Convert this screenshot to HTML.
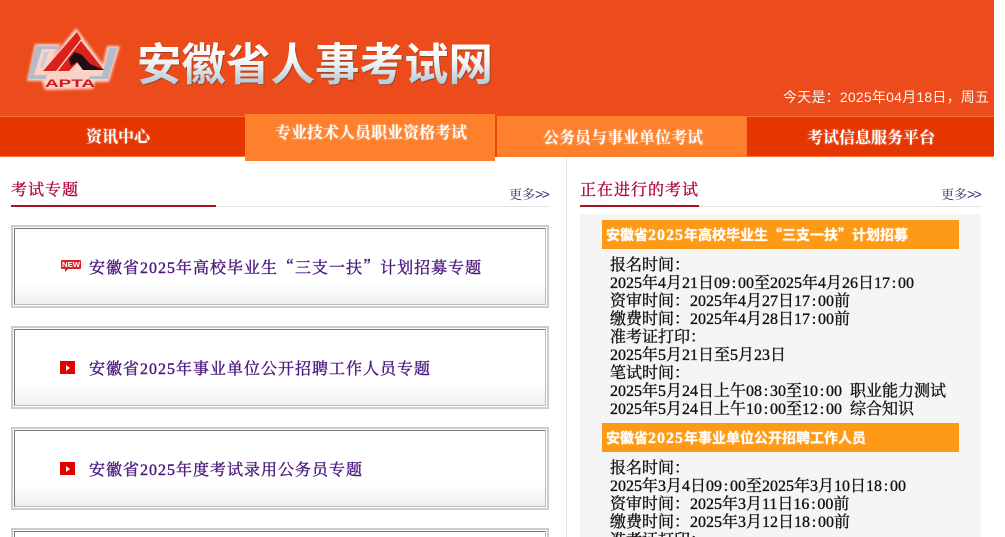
<!DOCTYPE html>
<html lang="zh-CN"><head><meta charset="utf-8"><title>安徽省人事考试网</title>
<style>
html,body{margin:0;padding:0;background:#fff;width:1005px;height:537px;overflow:hidden}
body{position:relative;font-family:"Liberation Serif","Noto Serif CJK SC",serif}
#w{position:absolute;left:0;top:0;width:1005px;height:537px;overflow:hidden}
.a{position:absolute;white-space:nowrap}
.hd{left:0;top:0;width:994px;height:116px;background:#ec4b1b}
.nav{left:0;top:116px;width:994px;height:41px;background:#e63600;border-top:1px solid #f9742c;border-bottom:1px solid #f9742c;box-sizing:border-box}
.nt{color:#fff;font:bold 16px/20px "Noto Serif CJK SC","Noto Sans CJK SC",serif;text-shadow:0 0 2px rgba(255,255,255,.45)}
.logoTitle{left:137px;top:32px;font:700 44.5px/58px "Noto Sans CJK SC",sans-serif;color:#e8eef3;background:linear-gradient(#fff 28%,#eef2f5 55%,#b9cedd 85%);-webkit-background-clip:text;background-clip:text;-webkit-text-fill-color:transparent;filter:drop-shadow(1px 1px 0 rgba(120,60,40,.6))}
.ttl{font-size:16px;line-height:20px;letter-spacing:1px;color:#b0063f;font-family:"Noto Serif CJK SC","Liberation Serif",serif;-webkit-text-stroke:.35px #b0063f}
.more{font:13px/16px "Noto Serif CJK SC",serif;color:#3a2a70}
.more i{font:normal 14px/16px "Liberation Sans",sans-serif;letter-spacing:-1.6px}
.box{left:11px;width:538px;height:83px;box-sizing:border-box;border:2px solid #ccc;padding:1px;background:#fff}
.box div{height:75px;border:1px solid #bbb;border-top-color:#777;border-left-color:#777;background:linear-gradient(#fff 72%,#efefef);box-sizing:content-box}
.lk{left:89px;font-size:16px;line-height:20px;letter-spacing:1px;color:#4c1a80;-webkit-text-stroke:.4px #4c1a80}
.lk s{text-decoration:none;font-family:"Noto Serif CJK SC",serif}
.play{left:60px;width:15px;height:13px;background:#e30000}
.play:after{content:"";position:absolute;left:6px;top:3.5px;border-left:4.5px solid #fff;border-top:3px solid transparent;border-bottom:3px solid transparent}
.bar{left:602px;width:357px;height:29px;background:#ff9a16;color:#fff;font:bold 14px/31px "Noto Sans CJK SC",sans-serif;padding-left:4px;box-sizing:border-box;text-shadow:0 0 1px #fff}
.bar b{font:bold 16px/20px "Liberation Serif",serif;letter-spacing:1px}
.ln{left:610px;font-size:16px;line-height:18px;color:#111;-webkit-text-stroke:.35px #111}
.ln u{text-decoration:none;display:inline-block;width:8px;text-align:center}
</style></head><body><div id="w">
<div class="a hd"></div>
<svg class="a" style="left:15px;top:15px" width="120" height="85" viewBox="0 0 120 85">
<defs><filter id="g" x="-20%" y="-20%" width="140%" height="140%"><feGaussianBlur stdDeviation="1.4"/></filter><filter id="s"><feGaussianBlur stdDeviation=".35"/></filter></defs>
<g filter="url(#g)" fill="#fff" opacity=".75"><path d="M61 13 92 55 82 61 78 74 30 75 27 66 12 66 20 29 46 29 38 42Z"/><path d="M92 31h13L94 67H76V60L86 58Z"/></g>
<g filter="url(#s)">
<path d="M21 31h23l-2 3H27L19 60h13l-1 4H13Z" fill="#b4bcc9"/><path d="M29 37h5l-6 16h-3Z" fill="#c9ced6"/>
<path d="M94 33h8l-9 31H74l1-3h12Z" fill="#b4bcc9"/>
<path d="M62 17 28 56H41L66 24Z" fill="#d9201f"/>
<path d="M66 26 89 55H74L66 44 54 56H43Z" fill="#d9201f"/>
<path d="M54 44 60 37 67 40 75 49 89 55H68L62 47 56 51Z" fill="#201012"/>
</g>
<text x="30" y="72" font-family="Liberation Sans,sans-serif" font-size="11" font-weight="bold" fill="#c9191c" textLength="50" lengthAdjust="spacingAndGlyphs">APTA</text>
</svg>
<div class="a logoTitle">安徽省人事考试网</div>
<div class="a" style="left:783px;top:88px;color:#fff;font:14px/18px 'Liberation Sans','Noto Sans CJK SC',sans-serif;letter-spacing:.22px;opacity:.95">今天是&#xFF1A;2025年04月18日&#xFF0C;周五</div>

<div class="a nav"></div>
<div class="a" style="left:496px;top:116px;width:251px;height:41px;background:#ff802c;border-right:1px solid #f9742c;box-sizing:border-box"></div>
<div class="a" style="left:495px;top:116px;width:2px;height:41px;background:#e64a0f"></div>
<div class="a" style="left:245px;top:114px;width:250px;height:47px;background:#ff802c"></div>
<div class="a nt" style="left:86px;top:126px">资讯中心</div>
<div class="a nt" style="left:275px;top:122px">专业技术人员职业资格考试</div>
<div class="a nt" style="left:543px;top:127px">公务员与事业单位考试</div>
<div class="a nt" style="left:807px;top:127px">考试信息服务平台</div>

<div class="a" style="left:566px;top:157px;width:1px;height:380px;background:#e4e4e4"></div>

<div class="a ttl" style="left:11px;top:179px">考试专题</div>
<div class="a" style="left:11px;top:206px;width:538px;height:1px;background:#e2e2e2"></div>
<div class="a" style="left:11px;top:205px;width:205px;height:2px;background:#a8141e"></div>
<div class="a more" style="left:509px;top:186px">更多<i>&gt;&gt;</i></div>

<div class="a box" style="top:225px"><div></div></div>
<div class="a box" style="top:326px"><div></div></div>
<div class="a box" style="top:427px"><div></div></div>
<div class="a box" style="top:528px;height:9px;overflow:hidden;border-bottom:0;padding-bottom:0"><div style="height:5px;border-bottom:0;background:#fff"></div></div>

<svg class="a" style="left:60px;top:259px" width="22" height="14" viewBox="0 0 22 14"><path d="M2 1h18a1 1 0 0 1 1 1v7a1 1 0 0 1-1 1H8l-3 3v-3H2a1 1 0 0 1-1-1V2a1 1 0 0 1 1-1Z" fill="#e02020"/><text x="2" y="8" font-family="Liberation Sans,sans-serif" font-size="7" font-weight="bold" fill="#fff" textLength="18" lengthAdjust="spacingAndGlyphs">NEW</text></svg>
<div class="a lk" style="top:257px">安徽省2025年高校毕业生<s>“</s>三支一扶<s>”</s>计划招募专题</div>
<div class="a play" style="top:361px"></div>
<div class="a lk" style="top:360px">安徽省2025年事业单位公开招聘工作人员专题</div>
<div class="a play" style="top:462px"></div>
<div class="a lk" style="top:461px">安徽省2025年度考试录用公务员专题</div>

<div class="a ttl" style="left:580px;top:179px">正在进行的考试</div>
<div class="a" style="left:580px;top:206px;width:401px;height:1px;background:#e2e2e2"></div>
<div class="a" style="left:580px;top:205px;width:119px;height:2px;background:#a8141e"></div>
<div class="a more" style="left:941px;top:186px">更多<i>&gt;&gt;</i></div>

<div class="a" style="left:580px;top:214px;width:401px;height:323px;background:#f5f5f5"></div>
<div class="a bar" style="top:220px">安徽省<b>2025</b>年高校毕业生“三支一扶”计划招募</div>
<div class="a ln" style="top:257px">报名时间&#xFF1A;</div>
<div class="a ln" style="top:275px">2025年4月21日09<u>:</u>00至2025年4月26日17<u>:</u>00</div>
<div class="a ln" style="top:293px">资审时间&#xFF1A;2025年4月27日17<u>:</u>00前</div>
<div class="a ln" style="top:311px">缴费时间&#xFF1A;2025年4月28日17<u>:</u>00前</div>
<div class="a ln" style="top:329px">准考证打印&#xFF1A;</div>
<div class="a ln" style="top:347px">2025年5月21日至5月23日</div>
<div class="a ln" style="top:365px">笔试时间&#xFF1A;</div>
<div class="a ln" style="top:383px">2025年5月24日上午08<u>:</u>30至10<u>:</u>00<u> </u>职业能力测试</div>
<div class="a ln" style="top:401px">2025年5月24日上午10<u>:</u>00至12<u>:</u>00<u> </u>综合知识</div>
<div class="a bar" style="top:423px">安徽省<b>2025</b>年事业单位公开招聘工作人员</div>
<div class="a ln" style="top:460px">报名时间&#xFF1A;</div>
<div class="a ln" style="top:478px">2025年3月4日09<u>:</u>00至2025年3月10日18<u>:</u>00</div>
<div class="a ln" style="top:496px">资审时间&#xFF1A;2025年3月11日16<u>:</u>00前</div>
<div class="a ln" style="top:514px">缴费时间&#xFF1A;2025年3月12日18<u>:</u>00前</div>
<div class="a ln" style="top:532px;height:5px;overflow:hidden">准考证打印&#xFF1A;</div>
</div></body></html>
